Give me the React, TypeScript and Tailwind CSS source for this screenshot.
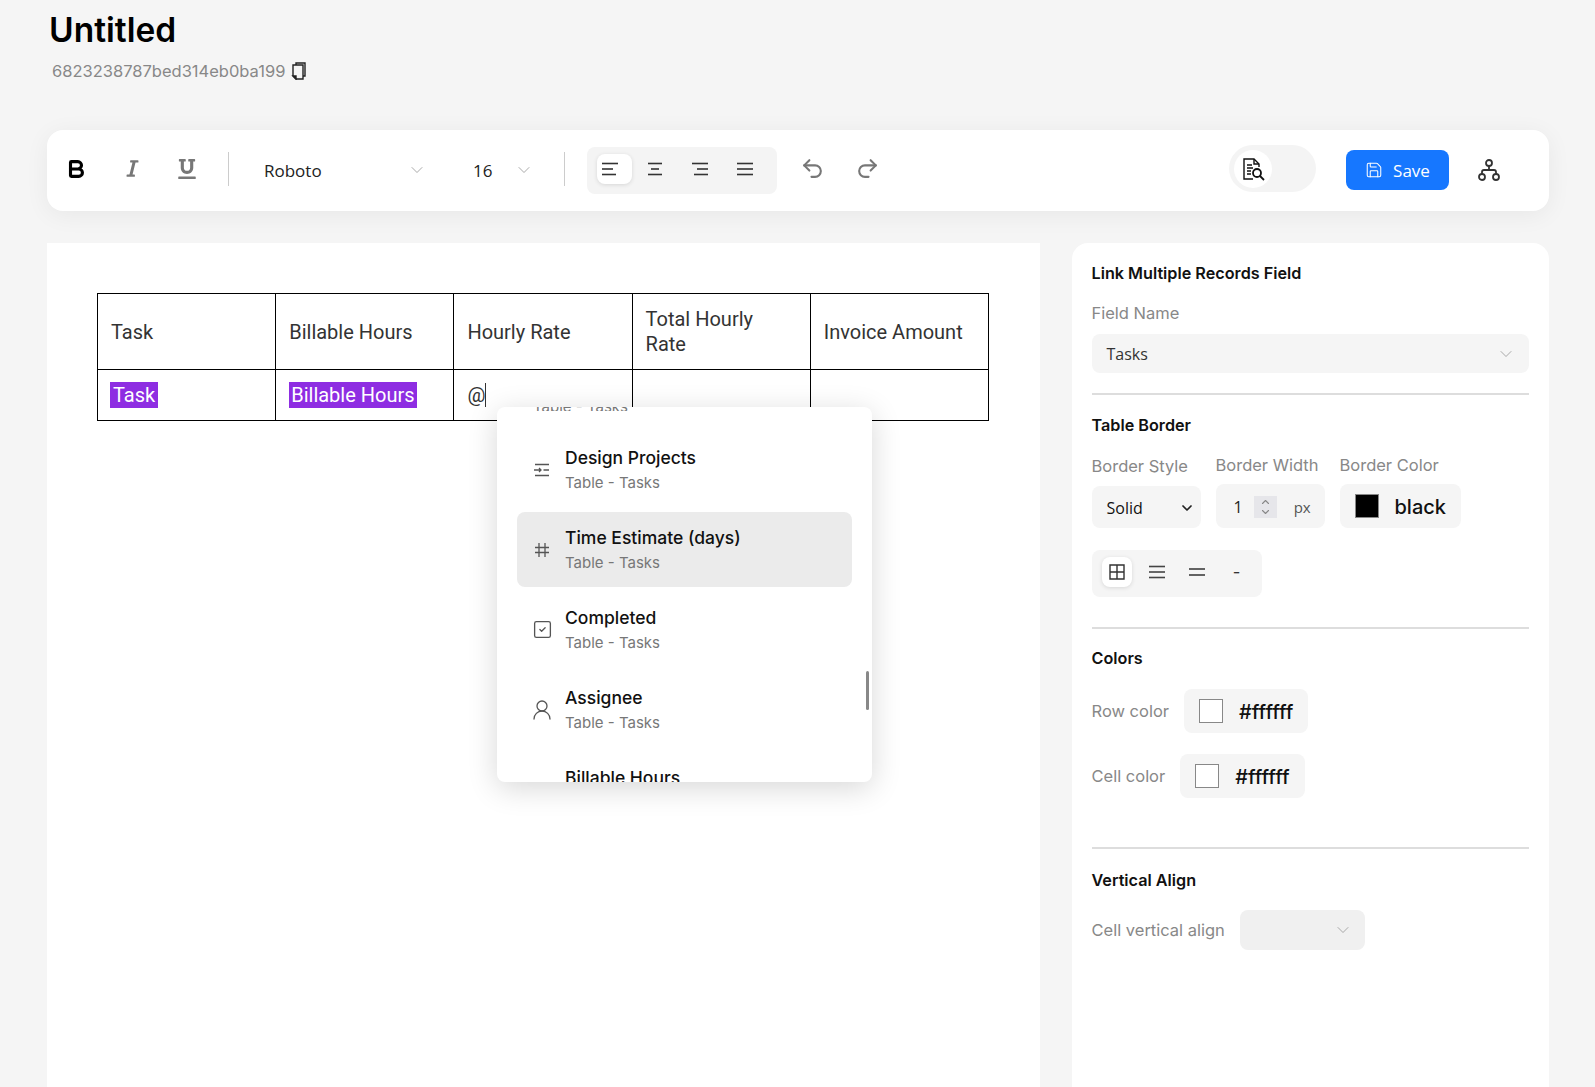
import { Bold, ChevronDown, ChevronUp, Undo2, Redo2, Save, SquareCheck, UserRound } from "lucide-react";
import { FaItalic, FaUnderline } from "react-icons/fa";

const HEADERS = ["Task", "Billable Hours", "Hourly Rate", "Total Hourly Rate", "Invoice Amount"];

function Lines({ rows, color = "#333" }: { rows: [number, number][]; color?: string }) {
  return (
    <svg width="20" height="20" viewBox="0 0 20 20" stroke={color} strokeWidth="1.6">
      {rows.map(([a, b], i) => (
        <line key={i} x1={a} x2={b} y1={4.5 + i * 5.5} y2={4.5 + i * 5.5} />
      ))}
    </svg>
  );
}

function LinkFieldIcon() {
  return (
    <svg width="18" height="18" viewBox="0 0 18 18" fill="none" stroke="#555" strokeWidth="1.3">
      <path d="M2 3.5h14M2 14.5h14M1 9h7M6 7l2 2-2 2M10.5 9H16" />
    </svg>
  );
}

function HashIcon() {
  return (
    <svg width="18" height="18" viewBox="0 0 18 18" fill="none" stroke="#555" strokeWidth="1.3">
      <path d="M6 2v14M12 2v14M2 6.5h14M2 11.5h14" />
    </svg>
  );
}

function OrgIcon() {
  return (
    <svg width="24" height="24" viewBox="0 0 24 24" fill="none" stroke="#333" strokeWidth="1.8">
      <circle cx="12" cy="5" r="3" />
      <circle cx="5" cy="19" r="3" />
      <circle cx="19" cy="19" r="3" />
      <path d="M12 8v4M5 16v-2a2 2 0 0 1 2-2h10a2 2 0 0 1 2 2v2" />
    </svg>
  );
}

function DocSearchIcon() {
  return (
    <svg width="24" height="24" viewBox="0 0 24 24" fill="none" stroke="#111" strokeWidth="1.4">
      <path d="M12 22H3V2h10l5 5v3" />
      <path d="M13 2v5h5M6 8h5M6 11h6M6 14h4M6 17h4" />
      <circle cx="16" cy="16" r="4" strokeWidth="1.8" />
      <path d="M19 19l4 4" strokeWidth="1.8" />
    </svg>
  );
}

function CopyIcon() {
  return (
    <svg width="16" height="18" viewBox="0 0 16 18" fill="none" stroke="#222" strokeWidth="1.4">
      <path d="M5 3V1h9v13h-2" />
      <path d="M2 3h10v14H5l-3-3z" />
      <path d="M2 14h3v3z" fill="#222" />
    </svg>
  );
}

function MenuItem({ icon, title, active }: { icon: React.ReactNode; title: string; active?: boolean }) {
  return (
    <div className={`flex h-[75px] items-center gap-[14px] rounded-lg pl-[16px] ${active ? "bg-[#ebebeb]" : ""}`}>
      <div className="flex w-[18px] justify-center text-[#555]">{icon}</div>
      <div className="pb-[2px]">
        <div className="text-[17.5px] leading-[28px] font-medium text-[#111]">{title}</div>
        <div className="text-[15px] leading-[22px] text-[#777]">Table - Tasks</div>
      </div>
    </div>
  );
}

function Mention() {
  return (
    <div className="absolute top-[407px] left-[497px] h-[375px] w-[375px] overflow-hidden rounded-lg bg-white font-['Inter',sans-serif] shadow-[0_6px_30px_rgba(0,0,0,0.16)]">
      <div className="h-[4px] overflow-hidden pl-[36px] text-[15px] leading-[0px] text-[#777]">Table - Tasks</div>
      <div className="mx-[20px] mt-[21px] flex flex-col gap-[5px]">
        <MenuItem icon={<LinkFieldIcon />} title="Design Projects" />
        <MenuItem icon={<HashIcon />} title="Time Estimate (days)" active />
        <MenuItem icon={<SquareCheck size={21} strokeWidth={1.5} className="shrink-0" />} title="Completed" />
        <MenuItem icon={<UserRound size={24} strokeWidth={1.3} className="shrink-0" />} title="Assignee" />
        <MenuItem icon={null} title="Billable Hours" />
      </div>
      <div className="absolute top-[264px] right-[3px] h-[39px] w-[3px] rounded bg-[#888]" />
    </div>
  );
}

function Toolbar() {
  return (
    <div className="flex h-[81px] items-center rounded-2xl bg-white pl-[21px] shadow-[0_4px_24px_rgba(0,0,0,0.06)]">
      <div className="mb-[4px] flex w-[16px] justify-center"><Bold size={22} strokeWidth={3.4} className="shrink-0 text-black" /></div>
      <FaItalic size={19} className="mb-[4px] ml-[39px] text-[#777]" />
      <FaUnderline size={20} className="mb-[4px] ml-[35px] text-[#777]" />
      <div className="mb-[4px] ml-[31px] h-[34px] w-px bg-[#ccc]" />
      <div className="ml-[35px] w-[143px] pt-[1px] font-['Open_Sans',sans-serif] text-[17px] text-[#222]">Roboto</div>
      <ChevronDown size={20} strokeWidth={1} className="mb-[2px] text-[#999]" />
      <div className="ml-[46px] w-[41px] pt-[1px] font-['Open_Sans',sans-serif] text-[17px] text-[#222]">16</div>
      <ChevronDown size={20} strokeWidth={1} className="mb-[2px] text-[#999]" />
      <div className="mb-[4px] ml-[30px] h-[34px] w-px bg-[#ccc]" />
      <div className="ml-[22px] flex h-[47px] w-[190px] items-center rounded-lg bg-[#f4f4f4] pb-[4px] pl-[10px]">
        <div className="flex h-[30px] w-[35px] items-center justify-center rounded-lg bg-white pr-[10px] pl-[1px] shadow-[0_1px_4px_rgba(0,0,0,0.12)]">
          <Lines rows={[[2, 18], [2, 13], [2, 16]]} />
        </div>
        <div className="ml-[10px] flex w-[35px] justify-center pr-[10px]"><Lines rows={[[3, 17], [6, 14], [3, 17]]} /></div>
        <div className="ml-[10px] flex w-[35px] justify-center pr-[10px]"><Lines rows={[[2, 18], [7, 18], [4, 18]]} /></div>
        <div className="ml-[10px] flex w-[35px] justify-center pr-[10px]"><Lines rows={[[2, 18], [2, 18], [2, 18]]} /></div>
      </div>
      <Undo2 size={25} strokeWidth={2} className="mb-[4px] ml-[23px] text-[#777]" />
      <Redo2 size={25} strokeWidth={2} className="mb-[4px] ml-[30px] text-[#777]" />
      <div className="mb-[4px] ml-[349px] flex h-[47px] w-[87px] items-center rounded-full bg-[#f4f4f4] pl-[5px]">
        <div className="flex h-[38px] w-[38px] items-center justify-center rounded-full bg-white">
          <DocSearchIcon />
        </div>
      </div>
      <button className="mb-[2px] ml-[30px] flex h-[40px] w-[103px] items-center justify-center gap-[10px] rounded-lg bg-[#1677ff] pt-[3px] font-['Open_Sans',sans-serif] text-[17px] text-white">
        <Save size={18} strokeWidth={1.4} className="-mt-[2px]" />
        Save
      </button>
      <div className="mb-[2px] ml-[28px]"><OrgIcon /></div>
    </div>
  );
}

function EditorTable() {
  return (
    <table className="w-[892px] table-fixed border-collapse font-['Roboto',sans-serif] text-[20px] leading-[25px] text-[#333]">
      <tbody>
        <tr className="h-[76px]">
          {HEADERS.map((h) => (
            <td key={h} className="border border-black px-[13px] pt-[1px]">{h}</td>
          ))}
        </tr>
        <tr className="h-[51px]">
          <td className="border border-black px-[12px]">
            <span className="bg-[#8e2de2] px-[3px] py-[1px] text-white">Task</span>
          </td>
          <td className="border border-black px-[13px]">
            <span className="bg-[#8e2de2] px-[2px] py-[1px] text-white">Billable Hours</span>
          </td>
          <td className="border border-black px-[13px]">
            <span className="border-r border-[#333]">@</span>
          </td>
          <td className="border border-black" />
          <td className="border border-black" />
        </tr>
      </tbody>
    </table>
  );
}

function SwatchBox({ value, swatch }: { value: string; swatch: string }) {
  return (
    <div className="flex h-[44px] items-center gap-[16px] rounded-lg bg-[#f5f5f5] px-[15px]">
      <div className={`h-[24px] w-[24px] border border-[#888] ${swatch}`} />
      <span className="pt-[1px] text-[20px] font-medium text-[#111]">{value}</span>
    </div>
  );
}

function SidePanel() {
  return (
    <div className="h-[900px] w-[477px] rounded-t-2xl bg-white pt-[20px] pr-[20px] pl-[19.5px] font-['Inter',sans-serif] text-[16.5px] text-[#888]">
      <div className="text-[16.2px] leading-[20px] font-semibold text-[#111]">Link Multiple Records Field</div>
      <div className="mt-[20px] leading-[20px]">Field Name</div>
      <div className="mt-[11px] flex h-[39px] items-center justify-between rounded-lg bg-[#f5f5f5] pr-[13px] pl-[15px] font-['Open_Sans',sans-serif] text-[16px] text-[#333]">
        Tasks
        <ChevronDown size={20} strokeWidth={1} className="text-[#999]" />
      </div>
      <div className="mt-[20px] h-[2px] bg-[#ddd]" />

      <div className="mt-[20px] text-[16.2px] leading-[20px] font-semibold text-[#111]">Table Border</div>
      <div className="mt-[21px] flex gap-[15px]">
        <div className="w-[109px]">
          <div className="leading-[20px]">Border Style</div>
          <div className="mt-[10px] flex h-[42px] items-center justify-between rounded-lg bg-[#f5f5f5] pt-[2px] pr-[6px] pl-[15px] font-['Open_Sans',sans-serif] text-[16px] text-[#111]">
            Solid
            <ChevronDown size={16} strokeWidth={2.6} className="text-[#222]" />
          </div>
        </div>
        <div className="w-[109px]">
          <div className="-mt-[1px] leading-[20px]">Border Width</div>
          <div className="mt-[9px] flex h-[44px] items-center rounded-lg bg-[#f5f5f5] pt-[2px] pl-[18px] font-['Open_Sans',sans-serif] text-[16px] text-[#222]">
            1
            <div className="ml-[11px] flex h-[22px] w-[23px] flex-col items-center justify-center bg-[#e6e6ea] text-[#888]">
              <ChevronUp size={13} strokeWidth={2.2} className="-mb-[1px]" />
              <ChevronDown size={13} strokeWidth={2.2} className="-mt-[1px]" />
            </div>
            <span className="ml-[17px] text-[15px] text-[#555]">px</span>
          </div>
        </div>
        <div>
          <div className="-mt-[1px] leading-[20px]">Border Color</div>
          <div className="mt-[9px]"><SwatchBox value="black" swatch="bg-black" /></div>
        </div>
      </div>
      <div className="mt-[22px] flex h-[47px] w-[170px] items-center rounded-lg bg-[#f5f5f5] pb-[3px] pl-[10px]">
        <div className="flex h-[30px] w-[30px] items-center justify-center rounded-lg bg-white shadow-[0_1px_4px_rgba(0,0,0,0.12)]">
          <svg width="16" height="16" viewBox="0 0 16 16" fill="none" stroke="#333" strokeWidth="1.4">
            <path d="M1 1h14v14H1zM8 1v14M1 8h14" />
          </svg>
        </div>
        <div className="ml-[10px] flex w-[30px] justify-center"><Lines rows={[[2, 18], [2, 18], [2, 18]]} color="#444" /></div>
        <div className="ml-[10px] flex w-[30px] justify-center">
          <svg width="18" height="8" viewBox="0 0 18 8" stroke="#333" strokeWidth="1.4"><path d="M1 1h16M1 7h16" /></svg>
        </div>
        <div className="ml-[10px] flex w-[30px] justify-center text-[#333]">-</div>
      </div>
      <div className="mt-[30px] h-[2px] bg-[#ddd]" />

      <div className="mt-[19px] text-[16.2px] leading-[20px] font-semibold text-[#111]">Colors</div>
      <div className="mt-[21px] flex items-center gap-[15px]">
        Row color
        <SwatchBox value="#ffffff" swatch="bg-white" />
      </div>
      <div className="mt-[21px] flex items-center gap-[15px]">
        Cell color
        <SwatchBox value="#ffffff" swatch="bg-white" />
      </div>
      <div className="mt-[49px] h-[2px] bg-[#ddd]" />

      <div className="mt-[21px] text-[16.2px] leading-[20px] font-semibold text-[#111]">Vertical Align</div>
      <div className="mt-[20px] flex items-center gap-[15px]">
        Cell vertical align
        <div className="flex h-[40px] w-[125px] items-center justify-end rounded-lg bg-[#f0f0f0] pr-[12px]">
          <ChevronDown size={20} strokeWidth={1} className="text-[#999]" />
        </div>
      </div>
    </div>
  );
}

export default function App() {
  return (
    <div className="relative h-[1087px] overflow-hidden bg-[#f5f5f5] pl-[47px] font-['Inter',sans-serif]">
      <div className="w-[1502px]">
        <h1 className="pt-[8px] pl-[2px] text-[33.5px] leading-[44px] font-semibold text-black">Untitled</h1>
        <div className="mt-[8px] flex items-center gap-[6px] pl-[5px] text-[16.5px] leading-[22px] text-[#888]">
          6823238787bed314eb0ba199
          <CopyIcon />
        </div>
        <div className="mt-[48px]"><Toolbar /></div>
        <div className="mt-[32px] flex gap-[32px]">
          <div className="h-[900px] w-[993px] bg-white pt-[50px] pl-[50px]">
            <EditorTable />
          </div>
          <SidePanel />
        </div>
      </div>
      <Mention />
    </div>
  );
}
